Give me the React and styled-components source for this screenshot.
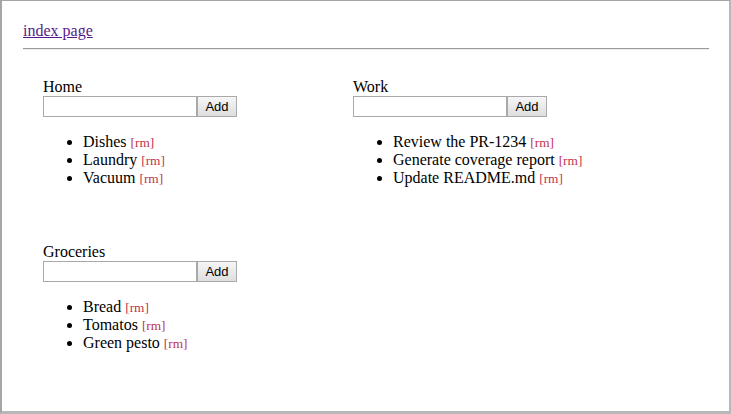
import React from "react";
import styled, { createGlobalStyle } from "styled-components";

const Global = createGlobalStyle`
  html, body { margin: 0; padding: 0; background: #fff; }
  body { font-family: "Liberation Serif", "Times New Roman", serif; font-size: 16px; color: #000; }
`;

const Frame = styled.div`
  box-sizing: border-box;
  width: 731px;
  height: 414px;
  border-style: solid;
  border-color: #a5a5a5;
  border-width: 1px 2px 3px 2px;
  border-right-color: #b8b8b8;
  border-bottom-color: #b8b8b8;
  padding: 21px 20px 0 21px;
  overflow: hidden;
`;

const NavLine = styled.div`
  line-height: 18px;
`;

const IndexLink = styled.a`
  color: #551a8b;
  text-decoration: underline;
`;

const Rule = styled.hr`
  margin: 8px 0;
  height: 0;
  border: 0;
  border-top: 1px solid #9a9a9a;
  border-bottom: 1px solid #eeeeee;
`;

const Lists = styled.div`
  display: flex;
  flex-wrap: wrap;
  align-items: flex-start;
`;

const Block = styled.section`
  width: 270px;
  margin: 20px;
`;

const Title = styled.div`
  line-height: 18px;
`;

const Form = styled.form`
  display: flex;
  margin: 0;
`;

const Input = styled.input`
  box-sizing: border-box;
  width: 154px;
  height: 21px;
  margin: 0;
  padding: 1px 2px;
  border: 1px solid #a9a9a9;
  background: #fff;
  font-family: "Liberation Sans", Arial, sans-serif;
  font-size: 13px;
`;

const Button = styled.button`
  box-sizing: border-box;
  width: 40px;
  height: 21px;
  margin: 0;
  padding: 0 6px;
  border: 1px solid #a9a9a9;
  border-radius: 0;
  background: linear-gradient(#f6f6f6, #dedede);
  font-family: "Liberation Sans", Arial, sans-serif;
  font-size: 13px;
  color: #000;
`;

const List = styled.ul`
  margin: 16px 0;
  padding-left: 40px;
  list-style: disc;
`;

const Item = styled.li`
  height: 18px;
  line-height: 18px;
`;

const Remove = styled.a`
  color: #c0354f;
  font-size: 13.33px;
  line-height: 1;
  text-decoration: none;
  cursor: pointer;
`;

const data = [
  { name: "Home", items: ["Dishes", "Laundry", "Vacuum"] },
  { name: "Work", items: ["Review the PR-1234", "Generate coverage report", "Update README.md"] },
  { name: "Groceries", items: ["Bread", "Tomatos", "Green pesto"] },
];

function TodoBlock({ name, items }) {
  return (
    <Block>
      <Title>{name}</Title>
      <Form onSubmit={(e) => e.preventDefault()}>
        <Input type="text" />
        <Button type="submit">Add</Button>
      </Form>
      <List>
        {items.map((it) => (
          <Item key={it}>
            {it} <Remove>[rm]</Remove>
          </Item>
        ))}
      </List>
    </Block>
  );
}

export default function App() {
  return (
    <>
      <Global />
      <Frame>
        <NavLine>
          <IndexLink href="#">index page</IndexLink>
        </NavLine>
        <Rule />
        <Lists>
          {data.map((b) => (
            <TodoBlock key={b.name} {...b} />
          ))}
        </Lists>
      </Frame>
    </>
  );
}
